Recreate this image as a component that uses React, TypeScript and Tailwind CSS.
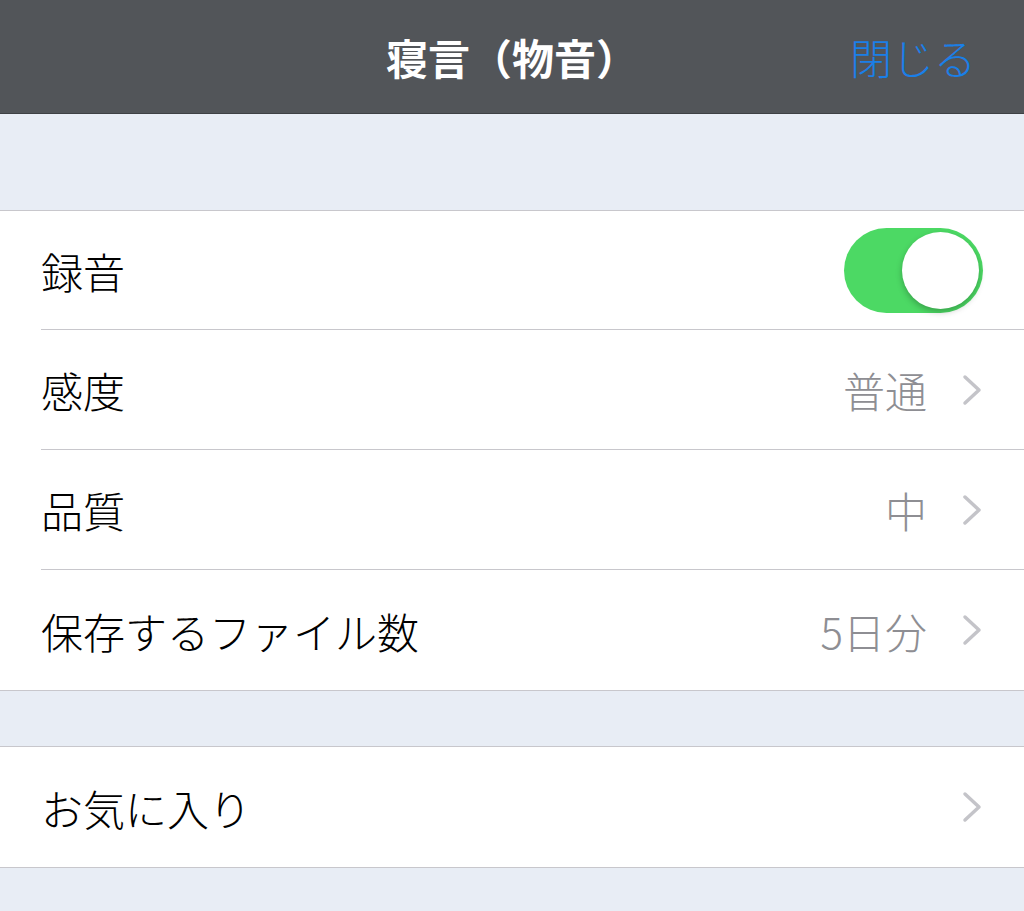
import { useState } from "react";

const font = { fontFamily: '"Noto Sans CJK JP", "Noto Sans", sans-serif' };

function Chevron() {
  return (
    <svg width="22" height="32" viewBox="0 0 22 32" className="shrink-0">
      <polyline points="4,3 18,16 4,29" fill="none" stroke="#c4c4c9" strokeWidth="3.5" strokeLinecap="round" strokeLinejoin="round" />
    </svg>
  );
}

function Toggle({ on, onChange }: { on: boolean; onChange: () => void }) {
  return (
    <button
      type="button"
      onClick={onChange}
      className={
        "relative h-[85px] w-[139px] rounded-full transition-colors " +
        (on ? "bg-[#4cd964]" : "bg-[#e5e5ea]")
      }
    >
      <span
        className={
          "absolute top-[4px] h-[77px] w-[77px] rounded-full bg-white shadow-[0_3px_6px_rgba(0,0,0,0.25)] transition-all " +
          (on ? "left-[58px]" : "left-[4px]")
        }
      />
    </button>
  );
}

type Row = { label: string; value?: string };

const settings: Row[] = [
  { label: "感度", value: "普通" },
  { label: "品質", value: "中" },
  { label: "保存するファイル数", value: "5日分" },
];

function NavRow({ label, value, last }: Row & { last?: boolean }) {
  return (
    <div className="pl-[41px]">
      <div className={"flex h-[120px] items-center pr-[41px] " + (last ? "" : "border-b border-[#c8c7cc]")}>
        <span className="flex-1 text-[42px] font-light text-black">{label}</span>
        {value && <span className="mr-[34px] text-[42px] font-light text-[#8e8e93]">{value}</span>}
        <Chevron />
      </div>
    </div>
  );
}

export default function App() {
  const [recording, setRecording] = useState(true);

  return (
    <div className="min-h-[911px] w-full overflow-hidden bg-[#e8edf5]" style={font}>
      <div className="relative flex h-[114px] items-center justify-center border-b border-[#3e4144] bg-[#525559]">
        <h1 className="text-[42px] font-bold text-white">寝言（物音）</h1>
        <button type="button" className="absolute right-[48px] text-[42px] font-light text-[#1a7fe8]">
          閉じる
        </button>
      </div>

      <div className="h-[96px]" />

      <div className="border-y border-[#c8c7cc] bg-white">
        <div className="pl-[41px]">
          <div className="flex h-[119px] items-center justify-between border-b border-[#c8c7cc] pr-[41px]">
            <span className="text-[42px] font-light text-black">録音</span>
            <Toggle on={recording} onChange={() => setRecording(!recording)} />
          </div>
        </div>
        {settings.map((s, i) => (
          <NavRow key={s.label} {...s} last={i === settings.length - 1} />
        ))}
      </div>

      <div className="h-[55px]" />

      <div className="border-y border-[#c8c7cc] bg-white">
        <NavRow label="お気に入り" last />
      </div>
    </div>
  );
}
